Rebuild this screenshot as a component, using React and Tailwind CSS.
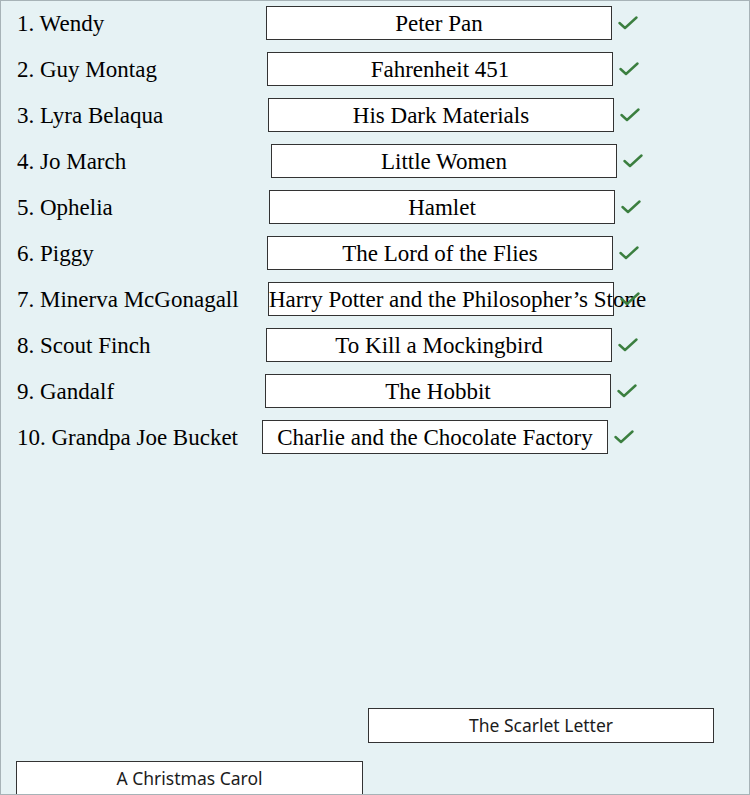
import React from 'react';

const rows = [
    { name: '1. Wendy', book: 'Peter Pan', shift: 'ml-0' },
    { name: '2. Guy Montag', book: 'Fahrenheit 451', shift: 'ml-[1px]' },
    { name: '3. Lyra Belaqua', book: 'His Dark Materials', shift: 'ml-[2px]' },
    { name: '4. Jo March', book: 'Little Women', shift: 'ml-[5px]' },
    { name: '5. Ophelia', book: 'Hamlet', shift: 'ml-[3px]' },
    { name: '6. Piggy', book: 'The Lord of the Flies', shift: 'ml-[1px]' },
    { name: '7. Minerva McGonagall', book: 'Harry Potter and the Philosopher\u2019s Stone', shift: 'ml-[2px]' },
    { name: '8. Scout Finch', book: 'To Kill a Mockingbird', shift: 'ml-0' },
    { name: '9. Gandalf', book: 'The Hobbit', shift: '-ml-[1px]' },
    { name: '10. Grandpa Joe Bucket', book: 'Charlie and the Chocolate Factory', shift: '-ml-[4px]' },
];

function Check() {
    return (
        <svg width="20" height="14" viewBox="0 0 20 14" fill="none" className="shrink-0">
            <polyline points="1.5,7 7,12 18.5,1.5" stroke="#3b7f3f" strokeWidth="2.4" strokeLinecap="round" strokeLinejoin="round" />
        </svg>
    );
}

export default function App() {
    return (
        <div className="w-[750px] h-[795px] overflow-hidden border border-[#a7b3b7] bg-[#e6f2f4] text-black font-['Liberation_Serif',serif]">
            <div className="flex flex-col gap-[12px] pt-[5px] pl-[16px]">
                {rows.map((row) => (
                    <div key={row.name} className="flex items-center h-[34px]">
                        <div className="w-[249px] text-[23px] leading-none whitespace-nowrap">{row.name}</div>
                        <div className={`${row.shift} w-[346px] h-[34px] shrink-0 border border-[#333] bg-white text-center text-[23px] leading-[33px] whitespace-nowrap`}>
                            {row.book}
                        </div>
                        <div className="ml-[6px]">
                            <Check />
                        </div>
                    </div>
                ))}
            </div>

            <div className="mt-[254px] flex flex-col font-['Noto_Sans',sans-serif] text-[17.5px] text-[#1c1c1c]">
                <div className="ml-[367px] w-[346px] h-[35px] border border-[#333] bg-white flex items-center justify-center">
                    The Scarlet Letter
                </div>
                <div className="ml-[15px] mt-[18px] w-[347px] h-[35px] border border-[#333] bg-white flex items-center justify-center">
                    A Christmas Carol
                </div>
            </div>
        </div>
    );
}
